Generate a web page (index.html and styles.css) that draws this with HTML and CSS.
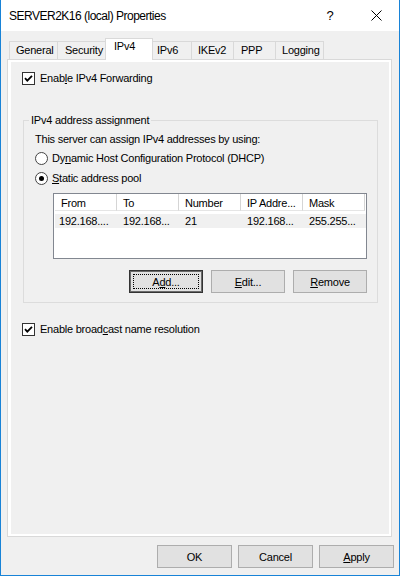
FILE: index.html
```html
<!DOCTYPE html>
<html lang="en">
<head>
<meta charset="utf-8">
<title>SERVER2K16 (local) Properties</title>
<link rel="stylesheet" href="styles.css">
</head>
<body>
<div class="window">
  <div class="titlebar">
    <span class="title">SERVER2K16 (local) Properties</span>
    <span class="tb-btn help">?</span>
    <span class="tb-btn close">
      <svg width="11" height="11" viewBox="0 0 11 11"><path d="M0.5 0.5L10.5 10.5M10.5 0.5L0.5 10.5" stroke="#000" stroke-width="1" fill="none"/></svg>
    </span>
  </div>

  <div class="tabs">
    <div class="tab t-general">General</div>
    <div class="tab t-security">Security</div>
    <div class="tab t-ipv4 active">IPv4</div>
    <div class="tab t-ipv6">IPv6</div>
    <div class="tab t-ikev2">IKEv2</div>
    <div class="tab t-ppp">PPP</div>
    <div class="tab t-logging">Logging</div>
  </div>

  <div class="panel">
    <div class="page">
      <div class="check">
        <span class="box"><svg width="11" height="11" viewBox="0 0 11 11"><path d="M2 5.2L4.3 7.6L9 2.8" stroke="#000" stroke-width="1.8" fill="none"/></svg></span>
        <span>Enab<u>l</u>e IPv4 Forwarding</span>
      </div>

      <fieldset class="group">
        <legend>IPv4 address assignment</legend>
        <div class="intro">This server can assign IPv4 addresses by using:</div>
        <div class="radio radio-first"><span class="circle"></span><span>Dy<u>n</u>amic Host Configuration Protocol (DHCP)</span></div>
        <div class="radio radio-next"><span class="circle on"></span><span><u>S</u>tatic address pool</span></div>

        <div class="listview">
          <div class="lv-head">
            <span class="lv-col">From</span>
            <span class="lv-col">To</span>
            <span class="lv-col">Number</span>
            <span class="lv-col">IP Addre...</span>
            <span class="lv-col">Mask</span>
          </div>
          <div class="lv-row">
            <span class="lv-cell first">192.168....</span>
            <span class="lv-cell">192.168...</span>
            <span class="lv-cell">21</span>
            <span class="lv-cell">192.168...</span>
            <span class="lv-cell">255.255...</span>
          </div>
        </div>

        <div class="group-buttons">
          <button class="btn btn-group default" type="button">A<u>d</u>d...</button>
          <button class="btn btn-group" type="button"><u>E</u>dit...</button>
          <button class="btn btn-group" type="button"><u>R</u>emove</button>
        </div>
      </fieldset>

      <div class="check check-bcast">
        <span class="box"><svg width="11" height="11" viewBox="0 0 11 11"><path d="M2 5.2L4.3 7.6L9 2.8" stroke="#000" stroke-width="1.8" fill="none"/></svg></span>
        <span>Enable broad<u>c</u>ast name resolution</span>
      </div>
    </div>
  </div>

  <div class="footer">
    <button class="btn" type="button">OK</button>
    <button class="btn" type="button">Cancel</button>
    <button class="btn" type="button"><u>A</u>pply</button>
  </div>
</div>
</body>
</html>
```

FILE: styles.css
```css
* {
  box-sizing: border-box;
}

html,
body {
  margin: 0;
  padding: 0;
  background: #f0f0f0;
}

body {
  font-family: "Liberation Sans", Arial, sans-serif;
  font-size: 11px;
  letter-spacing: -0.23px;
  color: #000;
}

u {
  text-decoration: underline;
  text-underline-offset: 1px;
}

/* dialog frame */
.window {
  width: 400px;
  height: 576px;
  border: 1px solid #1883d7;
  border-top: none;
  background: #f0f0f0;
  display: flex;
  flex-direction: column;
}

.titlebar {
  flex: none;
  height: 31px;
  background: #fff;
  display: flex;
  align-items: center;
}

.title {
  flex: 1;
  padding-left: 8px;
  font-size: 12px;
  letter-spacing: -0.5px;
}

.tb-btn {
  width: 46px;
  height: 31px;
  display: flex;
  align-items: center;
  justify-content: center;
}

.help {
  font-size: 13px;
}

/* tab strip */
.tabs {
  flex: none;
  display: flex;
  align-items: flex-end;
  height: 22px;
  margin: 7px 0 0 8px;
  position: relative;
  z-index: 1;
}

.tab {
  height: 18px;
  margin-bottom: 1px;
  margin-left: -1px;
  border: 1px solid #d9d9d9;
  border-bottom: none;
  background: #f0f0f0;
  padding: 2px 0 0 6px;
  line-height: 13px;
  white-space: nowrap;
}

.tab:first-child {
  margin-left: 0;
}

.tab.active {
  height: 22px;
  margin: 0 -2px 0 -3px;
  padding: 1px 0 0 8px;
  background: #fff;
  position: relative;
  z-index: 2;
}

.t-general { width: 49px; }
.t-security { width: 51px; padding-left: 7px; }
.t-ipv4 { width: 48px; }
.t-ipv6 { width: 42px; }
.t-ikev2 { width: 43px; }
.t-ppp { width: 43px; padding-left: 7px; }
.t-logging { width: 49px; }

/* tab body */
.panel {
  flex: none;
  margin: -1px 0 0 6px;
  width: 385px;
  height: 478px;
  border: 1px solid #d9d9d9;
  background: #fff;
  padding: 2px 2px 2px 3px;
}

.page {
  height: 100%;
  background: #f0f0f0;
  padding: 10px 0 0 11px;
}

/* check boxes and radio buttons */
.check {
  display: flex;
  align-items: center;
  height: 13px;
  line-height: 13px;
}

.box {
  flex: none;
  width: 13px;
  height: 13px;
  border: 1px solid #333;
  background: #fff;
  margin-right: 5px;
}

.box svg {
  display: block;
}

.check-bcast {
  margin-top: 20px;
}

.group {
  margin: 29px 0 0 1px;
  width: 355px;
  border: 1px solid #dcdcdc;
  padding: 6px 0 9px 11px;
  min-width: 0;
}

.group legend {
  padding: 0 2px;
  margin-left: -6px;
  line-height: 13px;
}

.intro {
  line-height: 13px;
}

.radio {
  display: flex;
  align-items: center;
  height: 13px;
  line-height: 13px;
}

.radio-first {
  margin-top: 6px;
}

.radio-next {
  margin-top: 7px;
}

.circle {
  flex: none;
  width: 13px;
  height: 13px;
  border: 1px solid #444;
  border-radius: 50%;
  background: #fff;
  margin-right: 4px;
  display: flex;
  align-items: center;
  justify-content: center;
}

.circle.on::after {
  content: "";
  width: 5px;
  height: 5px;
  border-radius: 50%;
  background: #000;
}

/* address pool list */
.listview {
  margin: 8px 0 0 18px;
  width: 314px;
  height: 66px;
  border: 1px solid #828790;
  background: #fff;
  padding-left: 1px;
}

.lv-head {
  display: flex;
  height: 17px;
}

.lv-col {
  width: 62px;
  height: 17px;
  border-right: 1px solid #d5d5d5;
  border-bottom: 1px solid #e5e5e5;
  padding: 2px 0 0 6px;
  line-height: 14px;
  white-space: nowrap;
}

.lv-row {
  display: flex;
  margin-top: 3px;
  height: 14px;
  background: #f0f0f0;
}

.lv-cell {
  width: 62px;
  padding-left: 6px;
  line-height: 14px;
  white-space: nowrap;
}

.lv-cell.first {
  padding-left: 4px;
}

/* push buttons */
.btn {
  width: 75px;
  height: 23px;
  border: 1px solid #adadad;
  background: #e1e1e1;
  font: inherit;
  letter-spacing: inherit;
  color: #000;
  padding: 0;
  margin: 0;
  position: relative;
}

.group-buttons {
  display: flex;
  justify-content: flex-end;
  gap: 8px;
  width: 314px;
  margin: 11px 0 0 18px;
}

.btn-group {
  width: 74px;
}

.btn.default {
  border: 1px solid #333;
  box-shadow: inset 0 0 0 1px #6b6b6b;
}

.btn.default::after {
  content: "";
  position: absolute;
  inset: 3px;
  border: 1px dotted #000;
}

.footer {
  flex: none;
  display: flex;
  justify-content: flex-end;
  gap: 6px;
  padding-right: 5px;
  margin-top: 8px;
}
```
